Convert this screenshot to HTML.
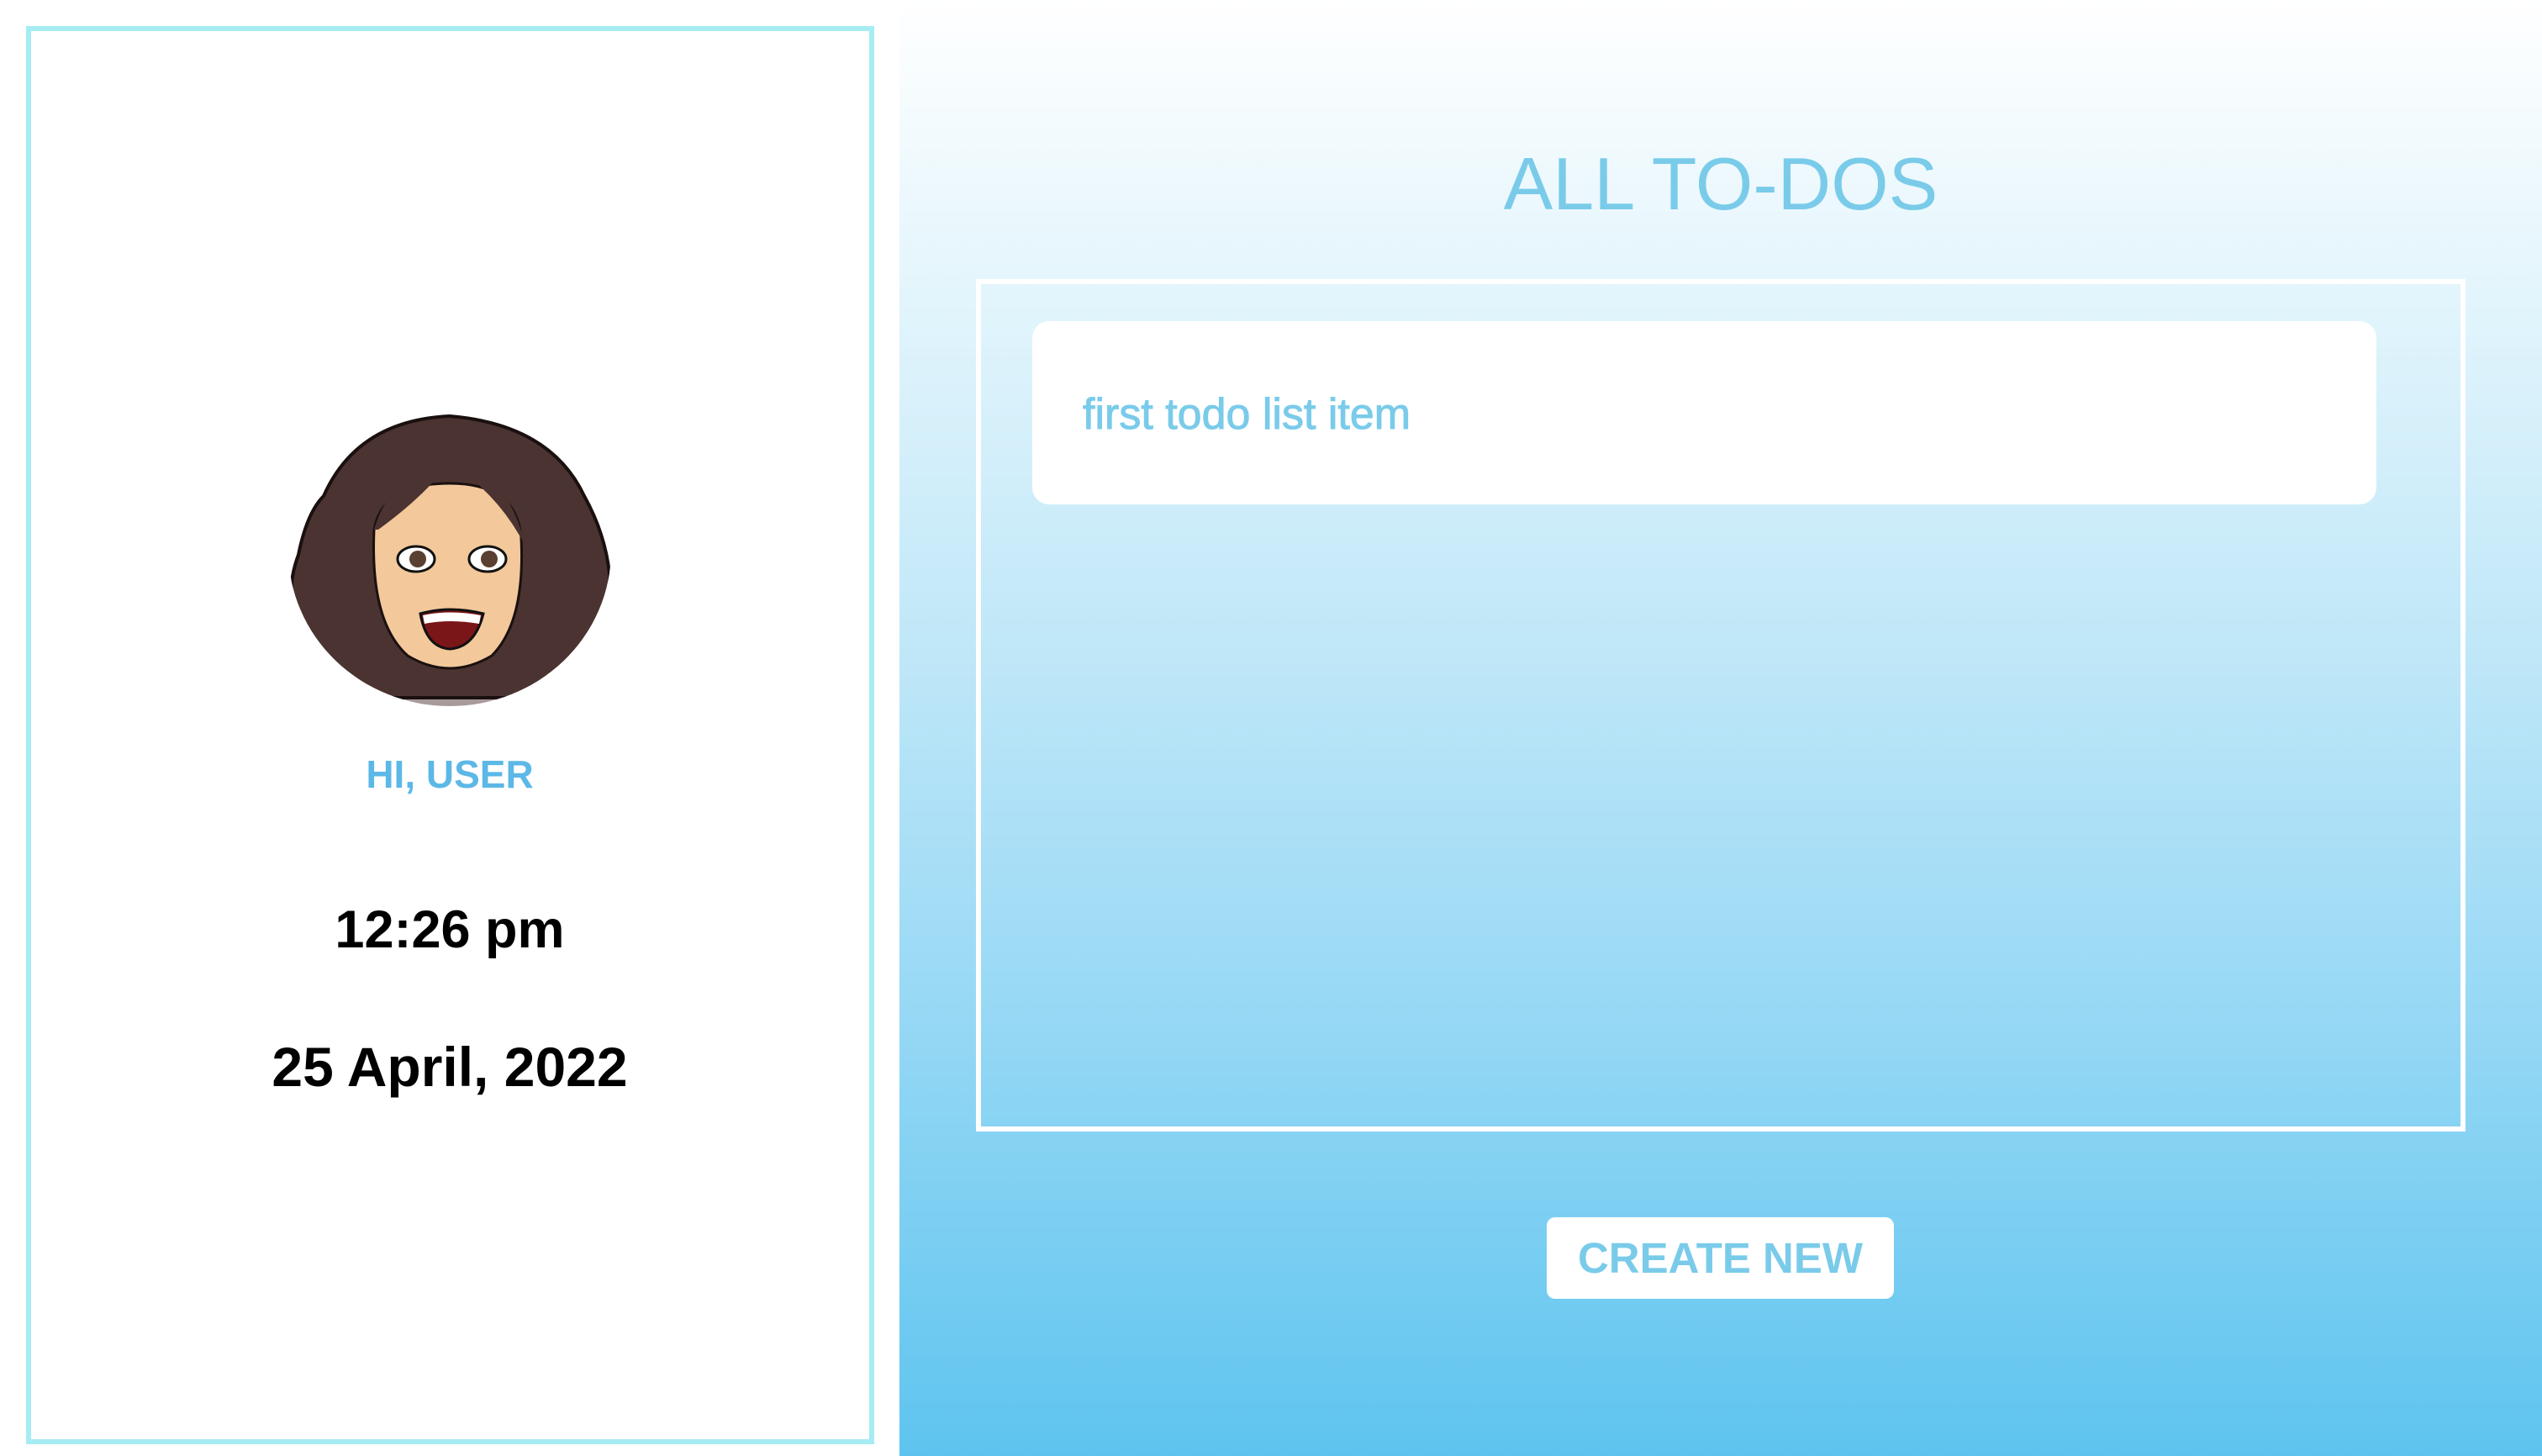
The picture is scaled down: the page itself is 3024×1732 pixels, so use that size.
<!DOCTYPE html>
<html><head><meta charset="utf-8"><style>
html,body{margin:0;padding:0;width:3024px;height:1732px;overflow:hidden;background:#fff;font-family:"Liberation Sans",sans-serif}
.left{position:absolute;left:31px;top:31px;width:997px;height:1675px;border:6px solid #a6ecf3;background:#fff}
.right{position:absolute;left:1070px;top:0;width:1954px;height:1732px;background:linear-gradient(#ffffff 0%,#e3f5fc 20%,#bfe7f8 45%,#96d8f5 70%,#5ec4ef 100%)}
.t{position:absolute;width:100%;text-align:center;left:0}
.c{position:absolute;left:0;width:1070px;text-align:center;font-weight:bold}
</style></head><body>
<div class="left"></div>
<svg style="position:absolute;left:335px;top:480px" width="400" height="370" viewBox="0 0 400 370">
<defs><clipPath id="cl"><ellipse cx="200" cy="175" rx="192" ry="185"/></clipPath></defs>
<g clip-path="url(#cl)">
<rect x="0" y="0" width="400" height="370" fill="#fff"/>
<path d="M120 370 L140 330 L260 330 L280 370Z" fill="#a89a9a"/>
<path d="M50 110 Q90 20 200 15 Q320 25 360 110 Q410 200 380 300 L340 350 L60 350 Q-10 260 20 180 Q30 130 50 110Z" fill="#4a3330" stroke="#1a1010" stroke-width="4"/>
<path d="M110 150 Q120 95 200 95 Q280 95 285 160 Q290 260 250 300 Q200 330 150 300 Q105 260 110 150Z" fill="#f3c89a" stroke="#1a1010" stroke-width="3"/>
<path d="M110 150 Q130 80 200 70 Q170 110 115 150Z" fill="#4a3330"/>
<path d="M200 70 Q270 80 290 170 Q260 110 200 70Z" fill="#4a3330"/>
<ellipse cx="160" cy="185" rx="22" ry="15" fill="#fff" stroke="#111" stroke-width="3"/>
<ellipse cx="245" cy="185" rx="22" ry="15" fill="#fff" stroke="#111" stroke-width="3"/>
<circle cx="162" cy="185" r="10" fill="#5a4030"/><circle cx="247" cy="185" r="10" fill="#5a4030"/>
<path d="M165 250 Q200 240 240 250 Q230 290 200 292 Q172 290 165 250Z" fill="#7a1518" stroke="#111" stroke-width="3"/>
<path d="M168 252 Q200 245 237 252 L235 262 Q200 256 170 262Z" fill="#fff"/>
</g></svg>
<div class="c" style="top:894px;font-size:46px;color:#5cb8e6">HI, USER</div>
<div class="c" style="top:1070px;font-size:63px;color:#000">12:26 pm</div>
<div class="c" style="top:1231px;font-size:66px;color:#000">25 April, 2022</div>
<div class="right">
<div class="t" style="top:168px;font-size:88px;color:#7acbea">ALL TO-DOS</div>
<div style="position:absolute;left:91px;top:332px;width:1760px;height:1002px;border:6px solid #fff"></div>
<div style="position:absolute;left:158px;top:382px;width:1599px;height:218px;background:#fff;border-radius:20px"></div>
<div style="position:absolute;left:218px;top:463px;font-size:52px;color:#7acbea;-webkit-text-stroke:1px #7acbea">first todo list item</div>
<div style="position:absolute;left:770px;top:1448px;width:413px;height:97px;background:#fff;border-radius:10px;text-align:center;line-height:97px;font-size:51px;font-weight:bold;color:#7acbea">CREATE NEW</div>
</div>
</body></html>
